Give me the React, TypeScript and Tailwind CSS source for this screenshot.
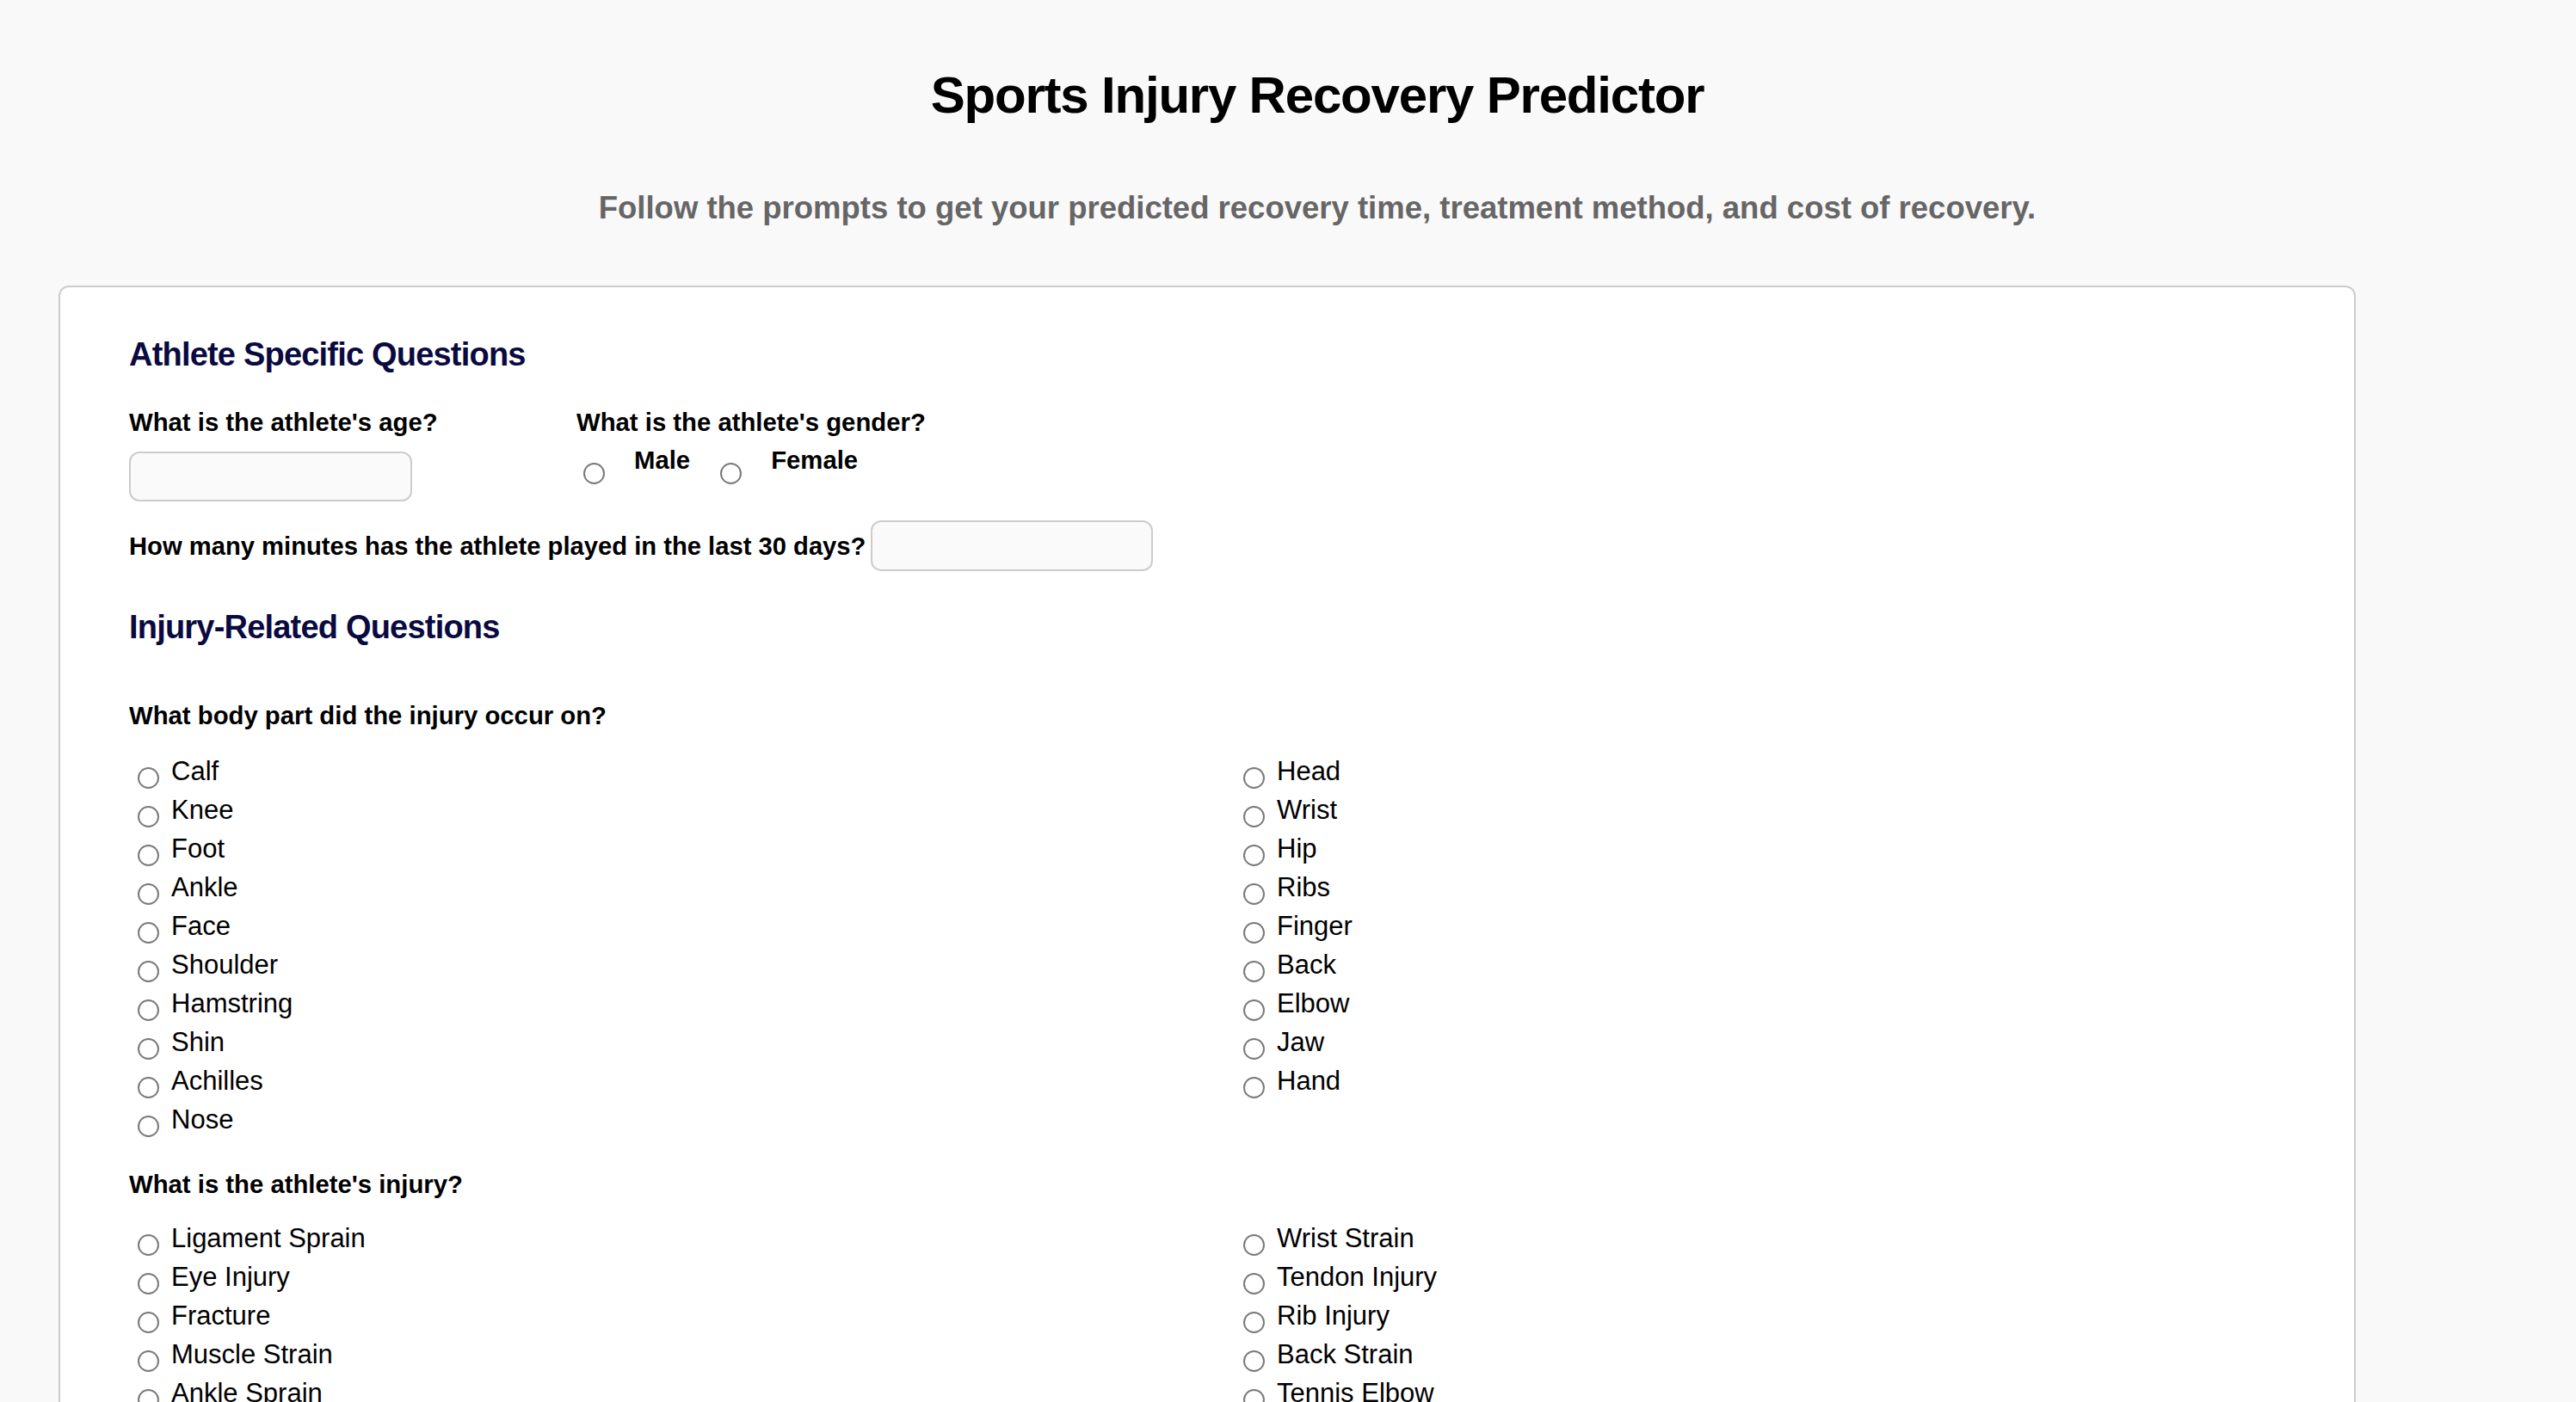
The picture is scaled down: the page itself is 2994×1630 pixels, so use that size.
import { useState } from 'react'

const bodyPartsLeft = ['Calf', 'Knee', 'Foot', 'Ankle', 'Face', 'Shoulder', 'Hamstring', 'Shin', 'Achilles', 'Nose']
const bodyPartsRight = ['Head', 'Wrist', 'Hip', 'Ribs', 'Finger', 'Back', 'Elbow', 'Jaw', 'Hand']
const injuriesLeft = ['Ligament Sprain', 'Eye Injury', 'Fracture', 'Muscle Strain', 'Ankle Sprain']
const injuriesRight = ['Wrist Strain', 'Tendon Injury', 'Rib Injury', 'Back Strain', 'Tennis Elbow']

function Radio({
  name,
  value,
  checked,
  onChange,
  className,
}: {
  name: string
  value: string
  checked: boolean
  onChange: (v: string) => void
  className?: string
}) {
  return (
    <input
      type="radio"
      name={name}
      value={value}
      checked={checked}
      onChange={() => onChange(value)}
      className={
        'h-[25px] w-[25px] shrink-0 appearance-none rounded-full border-2 border-[#7a7a7a] bg-white checked:border-[8px] checked:border-[#1a73e8] ' +
        (className ?? '')
      }
    />
  )
}

function OptionColumn({
  name,
  items,
  selected,
  onSelect,
}: {
  name: string
  items: string[]
  selected: string
  onSelect: (v: string) => void
}) {
  return (
    <div className="flex flex-col">
      {items.map((item) => (
        <label key={item} className="flex h-[45px] items-start">
          <Radio name={name} value={item} checked={selected === item} onChange={onSelect} className="ml-[10px] mt-[18px]" />
          <span className="ml-[14px] text-[31px] leading-[45px] text-black">{item}</span>
        </label>
      ))}
    </div>
  )
}

export default function App() {
  const [age, setAge] = useState('')
  const [minutes, setMinutes] = useState('')
  const [gender, setGender] = useState('')
  const [bodyPart, setBodyPart] = useState('')
  const [injury, setInjury] = useState('')

  return (
    <div className="min-h-screen bg-[#f9f9f9] pl-[68px] pb-[80px] font-['Liberation_Sans',Arial,sans-serif] text-black">
      <div className="pt-[71px]">
        <h1 className="text-center text-[60px] font-bold leading-[80px] tracking-[-1.2px]">
          Sports Injury Recovery Predictor
        </h1>
        <p className="mt-[67px] text-center text-[36.5px] font-bold leading-[48px] text-[#666666]">
          Follow the prompts to get your predicted recovery time, treatment method, and cost of recovery.
        </p>
      </div>

      <div className="mt-[66px] w-[2670px] rounded-[12px] border-2 border-[#cccccc] bg-white px-[80px] pb-[80px] pt-[54px]">
        <h2 className="text-[38px] font-bold leading-[48px] tracking-[-0.8px] text-[#0a0a40]">
          Athlete Specific Questions
        </h2>

        <div className="mt-[37px] flex">
          <div className="w-[520px]">
            <div className="text-[29.3px] font-bold leading-[36px]">What is the athlete's age?</div>
            <input
              type="text"
              value={age}
              onChange={(e) => setAge(e.target.value)}
              className="mt-[16px] h-[58px] w-[329px] rounded-[12px] border-2 border-[#cccccc] bg-[#fafafa] px-3 text-[28px] outline-none"
            />
          </div>
          <div>
            <div className="text-[29.3px] font-bold leading-[36px]">What is the athlete's gender?</div>
            <div className="mt-[8px] flex items-start">
              <Radio name="gender" value="Male" checked={gender === 'Male'} onChange={setGender} className="ml-[8px] mt-[21px]" />
              <span className="ml-[34px] text-[29.3px] font-bold leading-[36px]">Male</span>
              <Radio name="gender" value="Female" checked={gender === 'Female'} onChange={setGender} className="ml-[35px] mt-[21px]" />
              <span className="ml-[34px] text-[29.3px] font-bold leading-[36px]">Female</span>
            </div>
          </div>
        </div>

        <div className="mt-[22px] flex items-center">
          <span className="text-[29.2px] font-bold leading-[36px]">How many minutes has the athlete played in the last 30 days?</span>
          <input
            type="text"
            value={minutes}
            onChange={(e) => setMinutes(e.target.value)}
            className="ml-[6px] h-[59px] w-[328px] rounded-[12px] border-2 border-[#cccccc] bg-[#fafafa] px-3 text-[28px] outline-none"
          />
        </div>

        <h2 className="mt-[41px] text-[38px] font-bold leading-[48px] tracking-[-0.8px] text-[#0a0a40]">
          Injury-Related Questions
        </h2>

        <div className="mt-[61px] text-[29.3px] font-bold leading-[36px]">What body part did the injury occur on?</div>
        <div className="mt-[24px] grid grid-cols-[1223px_1fr] gap-x-[62px]">
          <OptionColumn name="bodyPart" items={bodyPartsLeft} selected={bodyPart} onSelect={setBodyPart} />
          <OptionColumn name="bodyPart" items={bodyPartsRight} selected={bodyPart} onSelect={setBodyPart} />
        </div>

        <div className="mt-[35px] text-[29.3px] font-bold leading-[36px]">What is the athlete's injury?</div>
        <div className="mt-[22px] grid grid-cols-[1223px_1fr] gap-x-[62px]">
          <OptionColumn name="injury" items={injuriesLeft} selected={injury} onSelect={setInjury} />
          <OptionColumn name="injury" items={injuriesRight} selected={injury} onSelect={setInjury} />
        </div>
      </div>
    </div>
  )
}
